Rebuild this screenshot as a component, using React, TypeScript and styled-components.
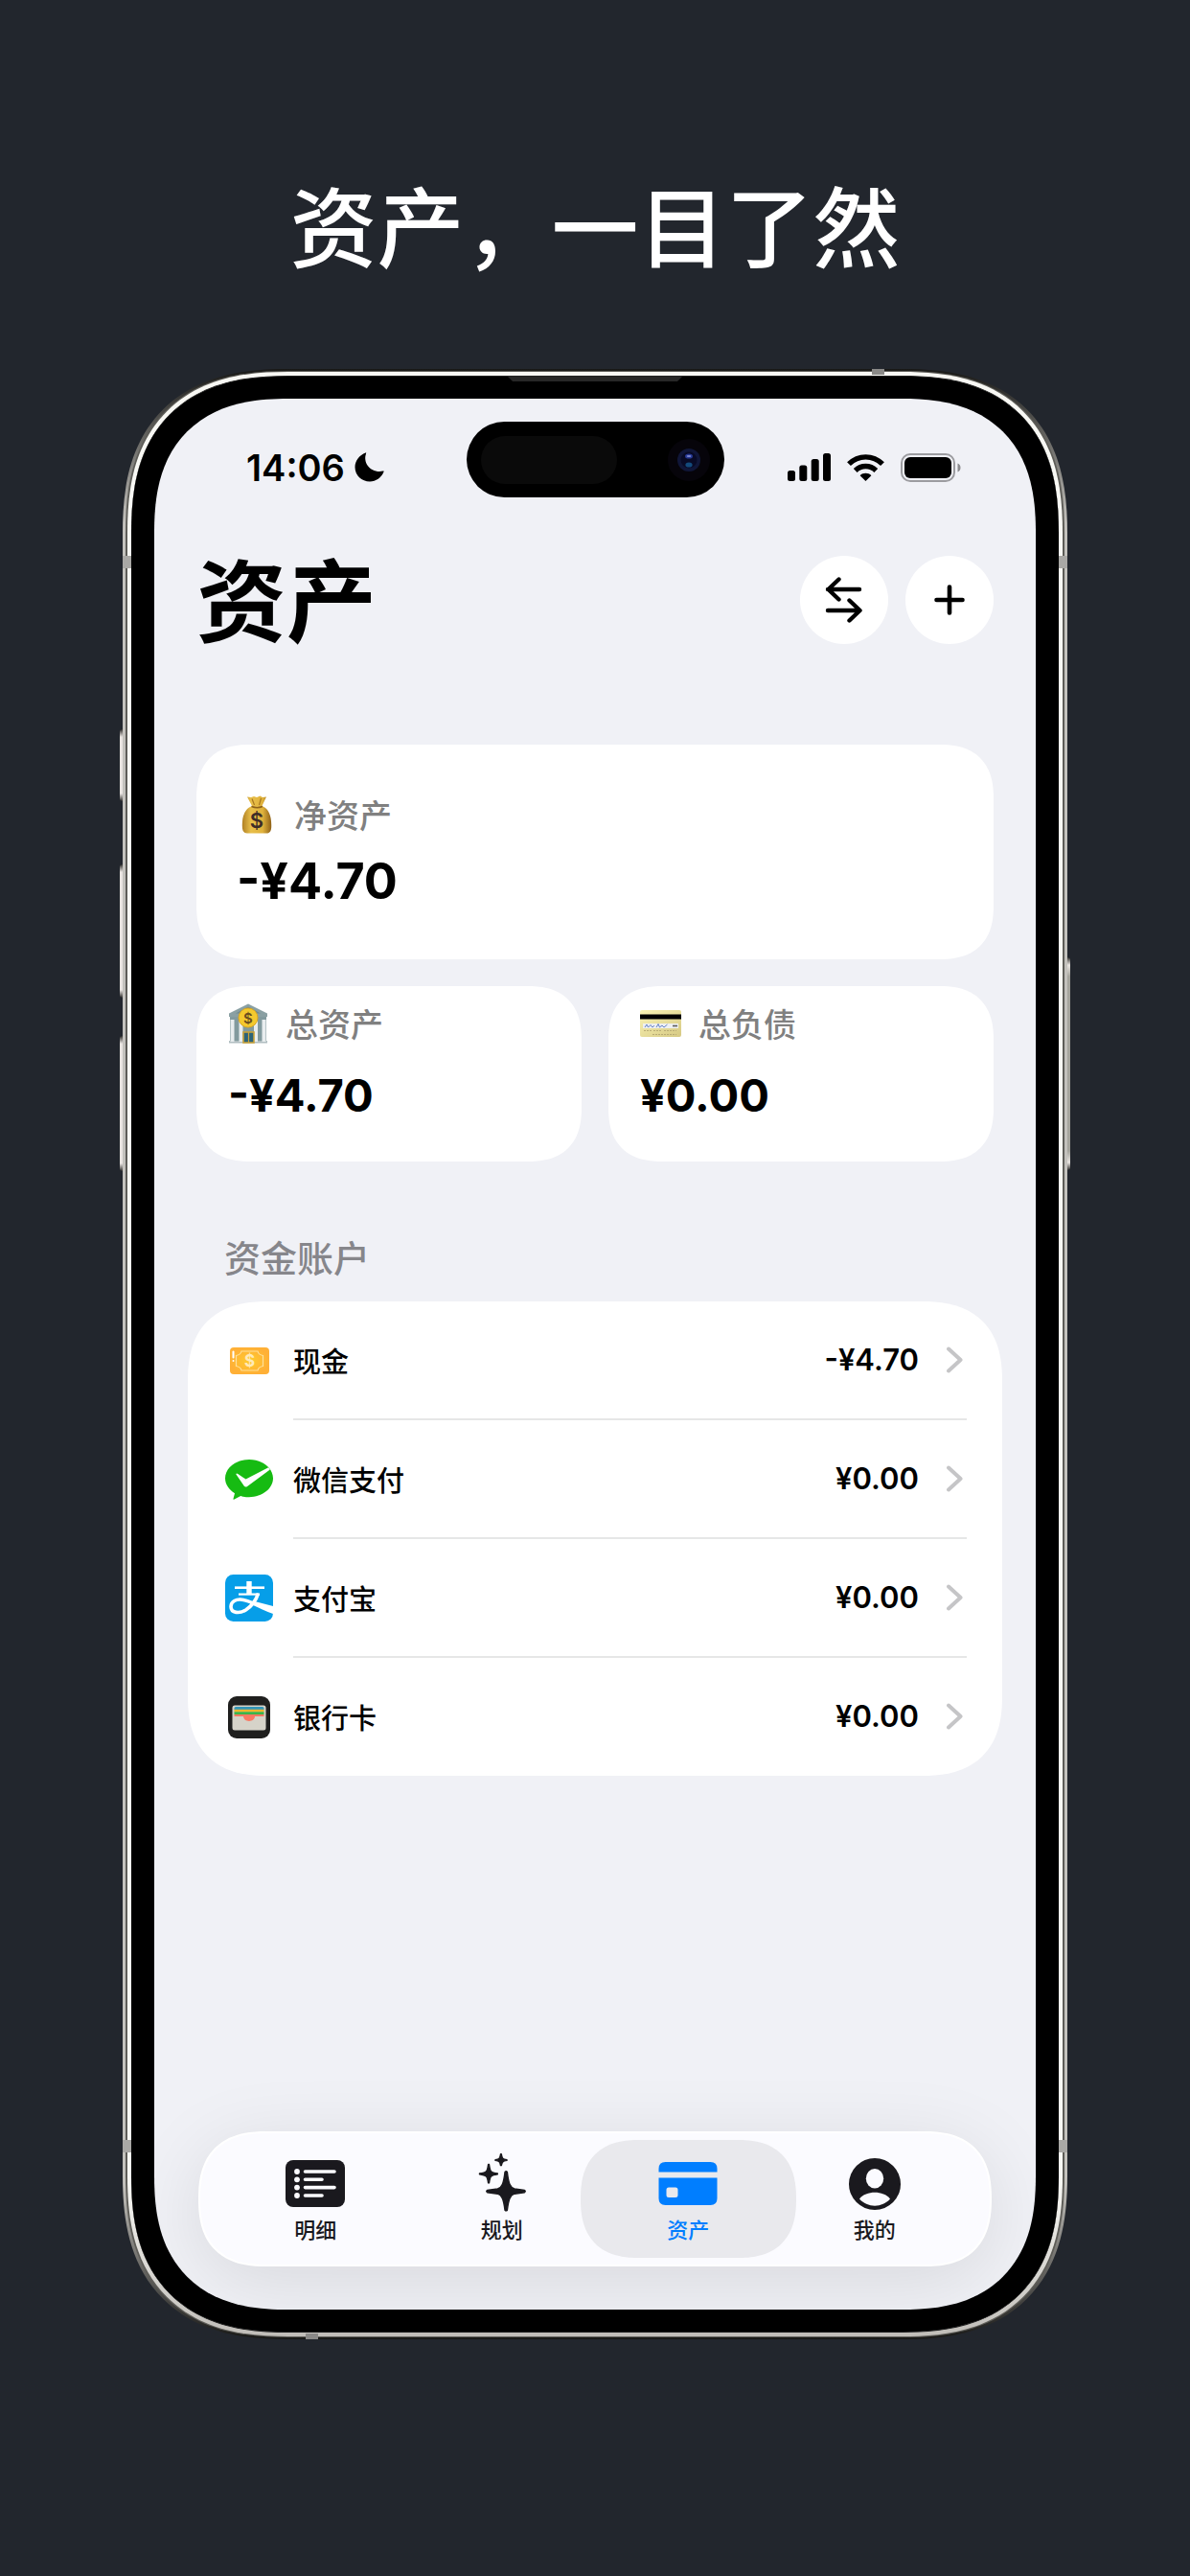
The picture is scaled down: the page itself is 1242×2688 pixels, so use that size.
import React from "react";
import styled, { createGlobalStyle, css } from "styled-components";

const cjk = `"Noto Sans CJK SC", sans-serif`;

const GlobalStyle = createGlobalStyle`
  *, *::before, *::after { box-sizing: border-box; }
  body {
    margin: 0;
    background: #22262d;
    font-family: Inter, ${cjk};
    color: #000;
  }
  h1, h2, p, ul { margin: 0; padding: 0; }
`;

const smooth = (round: number, squircle: number) => css`
  border-radius: ${round}px;
  @supports (corner-shape: superellipse(1.3)) {
    border-radius: ${squircle}px;
    corner-shape: superellipse(1.3);
  }
`;

/* ---------- poster ---------- */

const Poster = styled.main`
  min-height: 100vh;
  padding: 172px 128px 0;
  background: #22262d;
`;

const Headline = styled.h1`
  font: 500 91px/120px ${cjk};
  color: #fff;
  text-align: center;
`;

/* ---------- device ---------- */

const Device = styled.div`
  position: relative;
  max-width: 986px;
  margin: 93px auto 0;
`;

const OuterRing = styled.div`
  ${smooth(150, 172)}
  padding: 2px 3px;
  background: linear-gradient(#191917, #c4c2bd 160px, #c4c2bd calc(100% - 160px), #191917);
`;

const GrooveRing = styled.div`
  ${smooth(148, 170)}
  padding: 1px 2px;
  background: #5d5c57;
`;

const BrightRing = styled.div`
  ${smooth(147, 168)}
  padding: 4px;
  background: linear-gradient(#f8f8f4, #f8f8f4 calc(100% - 160px), #c0bdb8);
`;

const Bezel = styled.div`
  ${smooth(143, 164)}
  position: relative;
  padding: 23px 24px;
  border-top: 1px solid #222;
  border-bottom: 1px solid #222;
  background: #000;
`;

const SideKey = styled.span<{ $side: "left" | "right"; $top: number; $length: number }>`
  position: absolute;
  ${(p) => p.$side}: -3px;
  top: ${(p) => p.$top}px;
  width: 3px;
  height: ${(p) => p.$length}px;
  border-radius: ${(p) => (p.$side === "left" ? "3px 0 0 3px" : "0 3px 3px 0")};
  background: ${(p) =>
    p.$side === "left"
      ? "linear-gradient(#33322f, #e8e4e0 8px, #e8e4e0 calc(100% - 8px), #33322f)"
      : "linear-gradient(#33322f, #e8e4e0 8px, #a5a49c 20px, #a5a49c calc(100% - 20px), #e8e4e0 calc(100% - 8px), #33322f)"};
`;

const SideBand = styled.span<{ $side: "left" | "right"; $edge: "top" | "bottom" }>`
  position: absolute;
  ${(p) => p.$side}: 0;
  ${(p) => p.$edge}: 195px;
  width: 9px;
  height: 13px;
  background: #a9a8a5;
`;

const EndBand = styled.span<{ $side: "left" | "right"; $edge: "top" | "bottom" }>`
  position: absolute;
  ${(p) => p.$side}: 191px;
  ${(p) => p.$edge}: 0;
  width: 13px;
  height: 6px;
  background: #8a8987;
`;

const Earpiece = styled.span`
  position: absolute;
  top: 0;
  left: 50%;
  width: 182px;
  height: 5px;
  margin-left: -91px;
  background: #272727;
  clip-path: polygon(0 0, 100% 0, calc(100% - 5px) 100%, 5px 100%);
`;

const Screen = styled.div`
  ${smooth(120, 140)}
  display: flex;
  flex-direction: column;
  aspect-ratio: 920 / 1994;
  padding: 24px 0 45px;
  overflow: hidden;
  background: #f0f1f6;
`;

/* ---------- status bar ---------- */

const StatusBar = styled.div`
  display: grid;
  grid-template-columns: 1fr 269px 1fr;
`;

const StatusSide = styled.div<{ $end?: boolean }>`
  display: flex;
  align-items: center;
  justify-content: ${(p) => (p.$end ? "flex-end" : "flex-start")};
  gap: ${(p) => (p.$end ? 17 : 10)}px;
  padding: ${(p) => (p.$end ? "16px 78px 0 0" : "16px 0 0 96px")};
`;

const Clock = styled.span`
  font: 600 38px/40px Inter, sans-serif;
`;

const Island = styled.div`
  display: flex;
  align-items: center;
  justify-content: space-between;
  height: 79px;
  padding: 0 15px;
  border-radius: 40px;
  background: #000;
`;

const Sensor = styled.span`
  width: 142px;
  height: 50px;
  border-radius: 25px;
  background: #0a0a0a;
`;

/* ---------- header ---------- */

const Header = styled.header`
  display: flex;
  align-items: center;
  justify-content: space-between;
  margin: 61px 44px 0;
`;

const Title = styled.h2`
  padding-bottom: 8px;
  font: 700 94px/84px ${cjk};
`;

const Actions = styled.div`
  display: flex;
  gap: 18px;
`;

const RoundButton = styled.button`
  display: grid;
  place-items: center;
  width: 92px;
  height: 92px;
  padding: 0;
  border: 0;
  border-radius: 50%;
  background: #fff;
`;

/* ---------- summary cards ---------- */

const Summary = styled.section`
  display: grid;
  grid-template-columns: 1fr 1fr;
  gap: 28px;
  margin: 105px 44px 0;
`;

const Card = styled.article<{ $wide?: boolean }>`
  ${smooth(48, 57)}
  display: flex;
  flex-direction: column;
  gap: ${(p) => (p.$wide ? 20 : 25)}px;
  grid-column: ${(p) => (p.$wide ? "1 / -1" : "auto")};
  padding: ${(p) => (p.$wide ? "51px 42px 53px" : "17px 33px 41px")};
  background: #fff;
`;

const CardLabel = styled.p`
  display: flex;
  align-items: center;
  gap: 18px;
  font: 500 34px/44px ${cjk};
  color: #808080;
`;

const CardValue = styled.p<{ $wide?: boolean }>`
  font: 700 ${(p) => (p.$wide ? 52 : 47)}px/56px Inter, sans-serif;
`;

/* ---------- accounts ---------- */

const SectionTitle = styled.h2`
  margin: 77px 73px 25px;
  font: 500 38px/44px ${cjk};
  color: #86868b;
`;

const AccountList = styled.ul`
  ${smooth(72, 84)}
  margin: 0 35px;
  background: #fff;
  list-style: none;
`;

const AccountLink = styled.a`
  display: flex;
  align-items: stretch;
  gap: 21px;
  padding: 0 37px 0 39px;
  color: inherit;
  text-decoration: none;
`;

const AccountIcon = styled.span`
  display: grid;
  place-items: center;
  width: 50px;
`;

const AccountBody = styled.span`
  display: flex;
  flex: 1;
  align-items: center;
  height: 124px;
  padding-right: 4px;
  border-bottom: 2px solid #e6e7e7;
  li:last-child & {
    height: 123px;
    border-bottom-color: transparent;
  }
`;

const AccountName = styled.span`
  flex: 1;
  font: 500 29px/40px ${cjk};
`;

const AccountAmount = styled.span`
  margin-right: 28px;
  font: 600 31px/40px Inter, sans-serif;
`;

/* ---------- tab bar ---------- */

const TabBar = styled.nav`
  display: grid;
  grid-template-columns: repeat(4, 1fr);
  margin: auto 46px 0;
  padding: 7px 23px;
  border: 2px solid #fff;
  ${smooth(71, 71)}
  background: #fbfbff;
  box-shadow: 0 16px 80px rgba(0, 0, 0, 0.1);
`;

const Tab = styled.button<{ $active?: boolean }>`
  display: flex;
  flex-direction: column;
  align-items: center;
  gap: 2px;
  margin: 0 -15px;
  padding: 14px 0 17px;
  border: 0;
  ${smooth(62, 62)}
  background: ${(p) => (p.$active ? "#e9e9ed" : "transparent")};
  color: ${(p) => (p.$active ? "#007eff" : "#1a191e")};
  font: 500 22px/28px ${cjk};
`;

/* ---------- drawings ---------- */

const Moon = () => (
  <svg width="31" height="31" viewBox="0 0 31 31">
    <path d="M11.6 0.6C12.2 0 12.4 0.5 12 1.4C8.5 11 17 22 29.5 19.6C30.6 19.3 31 19.7 30.4 20.6C28 26.6 22.5 30.5 16 30.5C7.5 30.5 0.5 24 0.5 15.5C0.5 9 5 3 11.6 0.6Z" />
  </svg>
);

const CameraLens = () => (
  <svg width="44" height="44" viewBox="0 0 44 44">
    <circle cx="22" cy="22" r="22" fill="#06040a" />
    <circle cx="22" cy="22" r="12" fill="#101638" />
    <circle cx="22" cy="22" r="8.5" fill="#080a26" />
    <ellipse cx="22" cy="18" rx="4" ry="2.6" fill="#263893" />
    <ellipse cx="22" cy="18" rx="2.4" ry="1" fill="#7f88d0" />
    <ellipse cx="22" cy="27" rx="3.6" ry="2.6" fill="#134a7c" />
  </svg>
);

const Signal = () => (
  <svg width="45" height="29" viewBox="0 0 45 29">
    <rect x="0" y="18" width="8" height="11" rx="2.5" />
    <rect x="12.3" y="12.5" width="8" height="16.5" rx="2.5" />
    <rect x="24.7" y="6" width="8" height="23" rx="2.5" />
    <rect x="37" y="0" width="8" height="29" rx="2.5" />
  </svg>
);

const Wifi = () => (
  <svg width="39" height="28" viewBox="0 0 39 28">
    <g fill="none" stroke="#000" strokeWidth="5.4">
      <path d="M2 10.2C11.8 0.4 27.2 0.4 37 10.2" />
      <path d="M8.7 17C14.7 11 24.3 11 30.3 17" />
    </g>
    <path d="M13.6 22.2C16.8 19 22.2 19 25.4 22.2L19.5 28Z" />
  </svg>
);

const Battery = () => (
  <svg width="63" height="30" viewBox="0 0 63 30">
    <rect x="1" y="1" width="55" height="28" rx="9" fill="none" stroke="#9c9ca0" strokeWidth="2" />
    <rect x="4" y="4" width="49" height="22" rx="6" />
    <path d="M59.5 10.5C63.5 12 63.5 18 59.5 19.5Z" fill="#8b8b8e" />
  </svg>
);

const SwapIcon = () => (
  <svg width="40" height="48" viewBox="0 0 40 48" fill="none" stroke="#000" strokeWidth="4.4" strokeLinecap="round" strokeLinejoin="round">
    <path d="M36 13H3M14.5 2.5L3.5 13L14.5 23.5M3 35H36M25.5 24.5L36.5 35L25.5 45.5" />
  </svg>
);

const PlusIcon = () => (
  <svg width="34" height="34" viewBox="0 0 34 34" stroke="#000" strokeWidth="4.6" strokeLinecap="round">
    <path d="M17 3.5V30.5M3.5 17H30.5" />
  </svg>
);

const MoneyBag = () => (
  <svg width="42" height="42" viewBox="0 0 42 42">
    <defs>
      <linearGradient id="bag" x1="0" x2="1">
        <stop offset="0" stopColor="#b08024" />
        <stop offset="0.3" stopColor="#e8bf4a" />
        <stop offset="0.7" stopColor="#e0b23c" />
        <stop offset="1" stopColor="#8f6118" />
      </linearGradient>
    </defs>
    <path d="M11 2.5L15 3L18 2L21 3L24.5 1.5L27 3L31 2.5L26.5 12C32 14 35.5 20 36 28C36.6 35 36.5 40.5 31 40.5H11C5.5 40.5 5.5 35 6 28C6.5 20 10.5 14 16 12Z" fill="url(#bag)" />
    <path d="M15.5 12.5C19 14 23.5 14 27 12.5" stroke="#8d611a" strokeWidth="1.6" fill="none" />
    <path d="M16 4.5L18.5 11M25.5 4L23.5 11" stroke="#a87820" strokeWidth="1.2" />
    <text x="21" y="35" textAnchor="middle" fontFamily="Inter, sans-serif" fontSize="22" fontWeight="600" fill="#3d2c28">$</text>
  </svg>
);

const Bank = () => (
  <svg width="42" height="42" viewBox="0 0 42 42">
    <path d="M21 0.5L41 10.5V14H1V10.5Z" fill="#8aa0a3" />
    <path d="M21 3.5L34 10.5H8Z" fill="#6f888d" />
    <rect x="2" y="14" width="38" height="27" fill="#829a9e" />
    <rect x="1" y="39" width="40" height="2.5" fill="#b1bec1" />
    <g fill="#e9edef">
      <rect x="2.5" y="17" width="4" height="23" />
      <rect x="11.5" y="17" width="4" height="23" />
      <rect x="27" y="17" width="4" height="23" />
      <rect x="35.5" y="17" width="4" height="23" />
    </g>
    <rect x="16" y="30" width="11" height="11" fill="#2c6379" stroke="#c8a23b" strokeWidth="1.6" />
    <path d="M21.5 30V41" stroke="#c8a23b" strokeWidth="1.2" />
    <circle cx="21" cy="15" r="10" fill="#f4c92e" stroke="#dca820" />
    <text x="21" y="20.5" textAnchor="middle" fontFamily="Inter, sans-serif" fontSize="15" fontWeight="600" fill="#6b4e20">$</text>
  </svg>
);

const BankCard = () => (
  <svg width="43" height="42" viewBox="0 0 43 42">
    <defs>
      <linearGradient id="card" x1="0" y1="0" x2="1" y2="1">
        <stop offset="0" stopColor="#faf3b4" />
        <stop offset="1" stopColor="#d6c983" />
      </linearGradient>
    </defs>
    <rect x="0" y="7" width="43" height="28" rx="2" fill="url(#card)" />
    <rect x="0" y="11.5" width="43" height="5" fill="#000" />
    <rect x="3" y="21" width="37" height="5" fill="#eef0f2" />
    <path d="M5 25L7 22L8.5 25L11 22.5L13 25L15 23M17 25L19 21.5L20.5 25L23 23L25 25L28.5 22" fill="none" stroke="#6682c6" />
    <path d="M34 23.5H39" stroke="#5b5b5b" strokeWidth="1.6" />
    <path d="M4 28.5H12M14 28.5H22M25 28.5H38M13 32.5H38" stroke="#b9ac75" strokeDasharray="2 1" />
  </svg>
);

const Cash = () => (
  <svg width="41" height="28" viewBox="0 0 41 28">
    <defs>
      <radialGradient id="cash">
        <stop offset="0" stopColor="#ffcb2e" />
        <stop offset="1" stopColor="#ffb036" />
      </radialGradient>
    </defs>
    <rect width="41" height="28" rx="4" fill="url(#cash)" />
    <path d="M12 4H29C29.5 6.500 31.5 8 34.5 8.5V19.5C31.5 20 29.5 21.5 29 24H12C11.5 21.5 9.5 20 6.5 19.5V8.5C9.5 8 11.5 6.5 12 4Z" fill="none" stroke="#ffe09a" strokeWidth="1.2" />
    <path d="M3.5 4.5V10.5" stroke="#fff" strokeWidth="2" strokeLinecap="round" />
    <circle cx="3.5" cy="14" r="1" fill="#fff" />
    <text x="20.5" y="20" textAnchor="middle" fontFamily="Inter, sans-serif" fontSize="17" fontWeight="700" fill="#ffeab8">$</text>
  </svg>
);

const WeChatPay = () => (
  <svg width="50" height="42" viewBox="0 0 50 42">
    <path d="M25 0C38.8 0 50 8.8 50 19.6S38.8 39.2 25 39.2C21.8 39.2 19 38.8 16.2 37.9L9.5 41.5C8.5 42 8.2 41.5 8.6 40.5L10 35.2C4 31.6 0 26 0 19.6C0 8.8 11.2 0 25 0Z" fill="#16bb12" />
    <path d="M11.3 15.2C11.7 14.2 12.5 14.5 13.3 15L21.5 20.5L45.2 8.3L46.8 10.6L22.8 28.2C21.5 29 20.5 28.6 19.7 27.5Z" fill="#fff" />
  </svg>
);

const Alipay = () => (
  <svg width="50" height="50" viewBox="0 0 50 50">
    <rect width="50" height="49" rx="8.5" fill="#069ee8" />
    <g fill="none" stroke="#fff">
      <path d="M10 13.7H41" strokeWidth="2.6" />
      <path d="M14 20.6H36" strokeWidth="2.2" />
      <path d="M25 7V20" strokeWidth="5.4" />
      <path d="M34.5 19.6C32.5 26 27.5 33 21.5 37C15 41 6 40.5 6 33.5C6 28 11.5 25.5 17.5 26.2C24 27 32 31.5 50 37" strokeWidth="3.6" />
    </g>
    <path d="M29 27.5L50 33V41C43 38.5 35 34.5 27 31Z" fill="#fff" />
  </svg>
);

const Wallet = () => (
  <svg width="44" height="44" viewBox="0 0 44 44">
    <rect width="44" height="44" rx="9" fill="#1f1f1e" />
    <rect x="4.5" y="9.5" width="35" height="26" rx="2.5" fill="#d6d3c9" />
    <rect x="6.5" y="11" width="31" height="4" rx="1.5" fill="#3296b8" />
    <rect x="6.5" y="13.8" width="31" height="2.800" fill="#f6b62d" />
    <rect x="6.5" y="16.3" width="31" height="2.8" fill="#3ab54a" />
    <path d="M6.5 19H37.500V21H28C27.5 27.500 16.5 27.5 16 21H6.5Z" fill="#fb7862" />
  </svg>
);

const Chevron = () => (
  <svg width="18" height="28" viewBox="0 0 18 28" fill="none" stroke="#c5c5c7" strokeWidth="4" strokeLinecap="round" strokeLinejoin="round">
    <path d="M3 2.5L15.5 14L3 25.5" />
  </svg>
);

const DetailIcon = () => (
  <svg width="62" height="62" viewBox="0 0 62 62">
    <rect x="0" y="7" width="62" height="49" rx="8" fill="currentColor" />
    <g fill="#fbfbff">
      <circle cx="12" cy="19" r="2.9" />
      <circle cx="12" cy="27.3" r="2.9" />
      <circle cx="12" cy="35.6" r="2.9" />
      <circle cx="12" cy="44" r="2.9" />
    </g>
    <path d="M20.5 19H51M20.5 27.3H38M20.5 35.6H51M20.5 44H38" stroke="#fbfbff" strokeWidth="3.6" strokeLinecap="round" />
  </svg>
);

const PlanIcon = () => (
  <svg width="62" height="62" viewBox="0 0 62 62" fill="currentColor" stroke="currentColor" strokeWidth="1.4" strokeLinejoin="round">
    <path d="M34 19.5Q35.2 18 36.4 19.5C37.8 31.500 39.500 35.500 44 37L54.5 38.5Q56 39.6 54.5 40.7L44 42.200C39.500 43.700 37.800 47.700 36.4 59.2Q35.2 60.5 34 59.2C32.600 47.700 30.900 43.700 26.400 42.200L15.5 40.7Q14 39.6 15.5 38.5L26.400 37C30.900 35.500 32.600 31.500 34 19.5Z" />
    <path d="M16.6 11.5L17.5 11.5C18.5 19 19 20 26.3 21V21.8C19 22.8 18.5 24 17.5 30.8H16.6C15.6 24 15 22.8 7.5 21.8V21C15 20 15.6 19 16.6 11.5Z" />
    <path d="M29.5 0.8H30.3C31 5.5 31.5 6 36 6.8V7.4C31.5 8.2 31 8.8 30.3 12.5H29.5C28.8 8.8 28.3 8.2 24 7.4V6.8C28.3 6 28.8 5.5 29.5 0.8Z" />
  </svg>
);

const AssetIcon = () => (
  <svg width="62" height="62" viewBox="0 0 62 62" fill="currentColor">
    <path d="M0.5 19.5V16Q0.5 9 7.5 9H54.5Q61.5 9 61.5 16V19.5Z" />
    <path fillRule="evenodd" d="M0.5 25.5H61.5V47Q61.5 54 54.5 54H7.5Q0.5 54 0.5 47ZM11 35.5Q8.5 35.5 8.5 38V43.5Q8.5 46 11 46H18Q20.5 46 20.5 43.5V38Q20.5 35.5 18 35.5Z" />
  </svg>
);

const MeIcon = () => (
  <svg width="62" height="62" viewBox="0 0 62 62">
    <circle cx="31" cy="32" r="27" fill="currentColor" />
    <ellipse cx="31" cy="26.3" rx="9.2" ry="10.3" fill="#fbfbff" />
    <path d="M15 47.5C22 38.6 40 38.6 47 47.5C39 57 23 57 15 47.5Z" fill="#fbfbff" />
  </svg>
);

/* ---------- data ---------- */

const cards = [
  { label: "净资产", value: "-¥4.70", icon: <MoneyBag />, wide: true },
  { label: "总资产", value: "-¥4.70", icon: <Bank /> },
  { label: "总负债", value: "¥0.00", icon: <BankCard /> },
];

const accounts = [
  { name: "现金", amount: "-¥4.70", icon: <Cash /> },
  { name: "微信支付", amount: "¥0.00", icon: <WeChatPay /> },
  { name: "支付宝", amount: "¥0.00", icon: <Alipay /> },
  { name: "银行卡", amount: "¥0.00", icon: <Wallet /> },
];

const tabs = [
  { label: "明细", icon: <DetailIcon /> },
  { label: "规划", icon: <PlanIcon /> },
  { label: "资产", icon: <AssetIcon />, active: true },
  { label: "我的", icon: <MeIcon /> },
];

export default function App() {
  return (
    <>
      <GlobalStyle />
      <Poster>
        <Headline>资产，一目了然</Headline>
        <Device>
          <SideKey $side="left" $top={376} $length={75} />
          <SideKey $side="left" $top={517} $length={139} />
          <SideKey $side="left" $top={696} $length={141} />
          <SideKey $side="right" $top={614} $length={222} />
          <OuterRing>
            <GrooveRing>
              <BrightRing>
                <Bezel>
                  <Earpiece />
                  <Screen>
                    <StatusBar>
                      <StatusSide>
                        <Clock>14:06</Clock>
                        <Moon />
                      </StatusSide>
                      <Island>
                        <Sensor />
                        <CameraLens />
                      </Island>
                      <StatusSide $end>
                        <Signal />
                        <Wifi />
                        <Battery />
                      </StatusSide>
                    </StatusBar>

                    <Header>
                      <Title>资产</Title>
                      <Actions>
                        <RoundButton type="button" aria-label="转账">
                          <SwapIcon />
                        </RoundButton>
                        <RoundButton type="button" aria-label="添加">
                          <PlusIcon />
                        </RoundButton>
                      </Actions>
                    </Header>

                    <Summary>
                      {cards.map((c) => (
                        <Card key={c.label} $wide={c.wide}>
                          <CardLabel>
                            {c.icon}
                            {c.label}
                          </CardLabel>
                          <CardValue $wide={c.wide}>{c.value}</CardValue>
                        </Card>
                      ))}
                    </Summary>

                    <SectionTitle>资金账户</SectionTitle>
                    <AccountList>
                      {accounts.map((a) => (
                        <li key={a.name}>
                          <AccountLink href="#">
                            <AccountIcon>{a.icon}</AccountIcon>
                            <AccountBody>
                              <AccountName>{a.name}</AccountName>
                              <AccountAmount>{a.amount}</AccountAmount>
                              <Chevron />
                            </AccountBody>
                          </AccountLink>
                        </li>
                      ))}
                    </AccountList>

                    <TabBar>
                      {tabs.map((t) => (
                        <Tab key={t.label} type="button" $active={t.active}>
                          {t.icon}
                          {t.label}
                        </Tab>
                      ))}
                    </TabBar>
                  </Screen>
                </Bezel>
              </BrightRing>
            </GrooveRing>
          </OuterRing>
          <SideBand $side="left" $edge="top" />
          <SideBand $side="right" $edge="top" />
          <SideBand $side="left" $edge="bottom" />
          <SideBand $side="right" $edge="bottom" />
          <EndBand $side="right" $edge="top" />
          <EndBand $side="left" $edge="bottom" />
        </Device>
      </Poster>
    </>
  );
}
